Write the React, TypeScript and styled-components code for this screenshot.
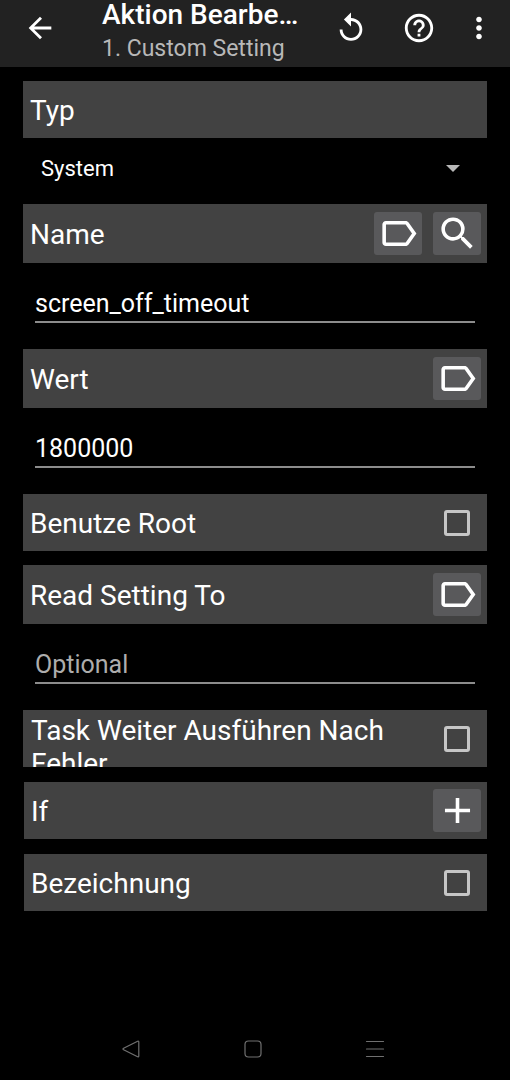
import React from "react";
import styled, { createGlobalStyle } from "styled-components";
import {
  MdAdd,
  MdArrowBack,
  MdHelpOutline,
  MdLabelOutline,
  MdMoreVert,
  MdReplay,
  MdSearch,
} from "react-icons/md";

const GlobalStyle = createGlobalStyle`
  *, *::before, *::after { box-sizing: border-box; }
  body {
    margin: 0;
    background: #000;
    color: #fff;
    font-family: Roboto, "Noto Sans", sans-serif;
  }
  button, input, select { font: inherit; color: inherit; }
`;

const Screen = styled.div`
  display: flex;
  flex-direction: column;
  min-height: 100vh;
`;

const AppBar = styled.header`
  display: flex;
  align-items: flex-start;
  padding-right: 5px;
  background: #222;
`;

const BarButton = styled.button<{ $width: number }>`
  display: flex;
  flex: none;
  align-items: center;
  justify-content: center;
  width: ${(p) => p.$width}px;
  height: 55px;
  padding: 0;
  border: 0;
  background: none;
  font-size: 34px;
`;

const Heading = styled.div`
  flex: 1;
  min-width: 0;
  padding-left: 22px;
`;

const Title = styled.h1`
  margin: 0 0 2px;
  font-size: 28px;
  font-weight: 500;
  line-height: 29px;
  white-space: nowrap;
`;

const Subtitle = styled.p`
  margin: 0;
  color: #b8b8b8;
  font-size: 23px;
  line-height: 36px;
  white-space: nowrap;
`;

const Form = styled.main`
  display: flex;
  flex: 1;
  flex-direction: column;
  padding: 14px 23px;
`;

const Panel = styled.div<{ $tall?: boolean; $gap?: number; $indent?: boolean }>`
  display: flex;
  flex: none;
  align-items: center;
  gap: 11px;
  height: ${(p) => (p.$tall ? 59 : 57)}px;
  margin-bottom: ${(p) => p.$gap ?? 0}px;
  margin-left: ${(p) => (p.$indent ? 1 : 0)}px;
  padding: 0 6px 0 7px;
  overflow: hidden;
  background: #424242;
`;

const PanelLabel = styled.label<{ $wrapped?: boolean }>`
  flex: 1;
  align-self: ${(p) => (p.$wrapped ? "flex-start" : "center")};
  padding-top: ${(p) => (p.$wrapped ? 4 : 2)}px;
  padding-left: ${(p) => (p.$wrapped ? 1 : 0)}px;
  font-size: 28px;
  line-height: 33px;
`;

const PanelButton = styled.button`
  display: flex;
  flex: none;
  align-items: center;
  justify-content: center;
  width: 48px;
  height: 43px;
  padding: 0;
  border: 0;
  border-radius: 3px;
  background: #59595b;
  font-size: 43px;
`;

const CheckBox = styled.input.attrs({ type: "checkbox" })`
  flex: none;
  width: 26px;
  height: 26px;
  margin: 0 11px;
  appearance: none;
  border: 3px solid #c6c6c6;
  border-radius: 3px;

  &:checked {
    background: #c6c6c6;
  }
`;

const SelectWrap = styled.div`
  display: flex;
  position: relative;
  align-items: center;
  height: 60px;
  margin-bottom: 6px;
`;

const Select = styled.select`
  width: 100%;
  height: 100%;
  padding: 0 60px 0 18px;
  appearance: none;
  border: 0;
  background: transparent;
  font-size: 22px;

  option {
    background: #424242;
  }
`;

const SelectArrow = styled.svg`
  position: absolute;
  right: 27px;
  width: 14px;
  height: 7px;
  fill: #b8b8b8;
  pointer-events: none;
`;

const TextField = styled.input.attrs({ type: "text" })`
  flex: none;
  height: 60px;
  margin: 0 12px 26px;
  padding: 22px 0 0;
  border: 0;
  border-bottom: 2px solid #8c8c8c;
  border-radius: 0;
  outline: none;
  background: transparent;
  font-size: 25px;

  &::placeholder {
    color: #adadad;
    opacity: 1;
  }
`;

const NavBar = styled.nav`
  display: grid;
  grid-template-columns: repeat(3, 1fr);
  height: 62px;
  padding: 0 74px 0 70px;
`;

const NavButton = styled.button`
  display: flex;
  align-items: center;
  justify-content: center;
  padding: 0;
  border: 0;
  background: none;

  svg {
    width: 20px;
    height: 20px;
    fill: none;
    stroke: #707070;
    stroke-width: 1.2;
    stroke-linejoin: round;
    stroke-linecap: round;
  }
`;

const VariableButton = () => (
  <PanelButton type="button" aria-label="Variable">
    <MdLabelOutline />
  </PanelButton>
);

export default function App() {
  return (
    <Screen>
      <GlobalStyle />
      <AppBar>
        <BarButton type="button" $width={80} aria-label="Zurück">
          <MdArrowBack />
        </BarButton>
        <Heading>
          <Title>Aktion Bearbe…</Title>
          <Subtitle>1. Custom Setting</Subtitle>
        </Heading>
        <BarButton type="button" $width={68} aria-label="Wiederherstellen">
          <MdReplay />
        </BarButton>
        <BarButton type="button" $width={68} aria-label="Hilfe">
          <MdHelpOutline />
        </BarButton>
        <BarButton type="button" $width={52} aria-label="Mehr">
          <MdMoreVert />
        </BarButton>
      </AppBar>

      <Form>
        <Panel>
          <PanelLabel htmlFor="type">Typ</PanelLabel>
        </Panel>
        <SelectWrap>
          <Select id="type" defaultValue="System">
            <option>System</option>
          </Select>
          <SelectArrow viewBox="0 0 14 7" aria-hidden="true">
            <path d="M0 0h14L7 7z" />
          </SelectArrow>
        </SelectWrap>

        <Panel $tall>
          <PanelLabel htmlFor="name">Name</PanelLabel>
          <VariableButton />
          <PanelButton type="button" aria-label="Suchen">
            <MdSearch />
          </PanelButton>
        </Panel>
        <TextField id="name" defaultValue="screen_off_timeout" spellCheck={false} />

        <Panel $tall>
          <PanelLabel htmlFor="value">Wert</PanelLabel>
          <VariableButton />
        </Panel>
        <TextField id="value" defaultValue="1800000" />

        <Panel $gap={14}>
          <PanelLabel htmlFor="root">Benutze Root</PanelLabel>
          <CheckBox id="root" />
        </Panel>

        <Panel $tall>
          <PanelLabel htmlFor="read">Read Setting To</PanelLabel>
          <VariableButton />
        </Panel>
        <TextField id="read" placeholder="Optional" />

        <Panel $gap={15}>
          <PanelLabel htmlFor="continue" $wrapped>
            Task Weiter Ausführen Nach Fehler
          </PanelLabel>
          <CheckBox id="continue" />
        </Panel>

        <Panel $gap={15} $indent>
          <PanelLabel htmlFor="condition">If</PanelLabel>
          <PanelButton id="condition" type="button" aria-label="Bedingung hinzufügen">
            <MdAdd />
          </PanelButton>
        </Panel>

        <Panel $indent>
          <PanelLabel htmlFor="caption">Bezeichnung</PanelLabel>
          <CheckBox id="caption" />
        </Panel>
      </Form>

      <NavBar>
        <NavButton type="button" aria-label="Zurück">
          <svg viewBox="0 0 20 20">
            <path d="M16.6 2.2 2.6 9.2q-1.2.8 0 1.6l14 7q1.2.4 1.2-.8V3q0-1.2-1.2-.8z" />
          </svg>
        </NavButton>
        <NavButton type="button" aria-label="Startseite">
          <svg viewBox="0 0 20 20">
            <rect x="2" y="2" width="16" height="16" rx="3.5" />
          </svg>
        </NavButton>
        <NavButton type="button" aria-label="Letzte Apps">
          <svg viewBox="0 0 20 20">
            <path d="M1.5 2.5h17M1.5 10h17M1.5 17.5h17" />
          </svg>
        </NavButton>
      </NavBar>
    </Screen>
  );
}
